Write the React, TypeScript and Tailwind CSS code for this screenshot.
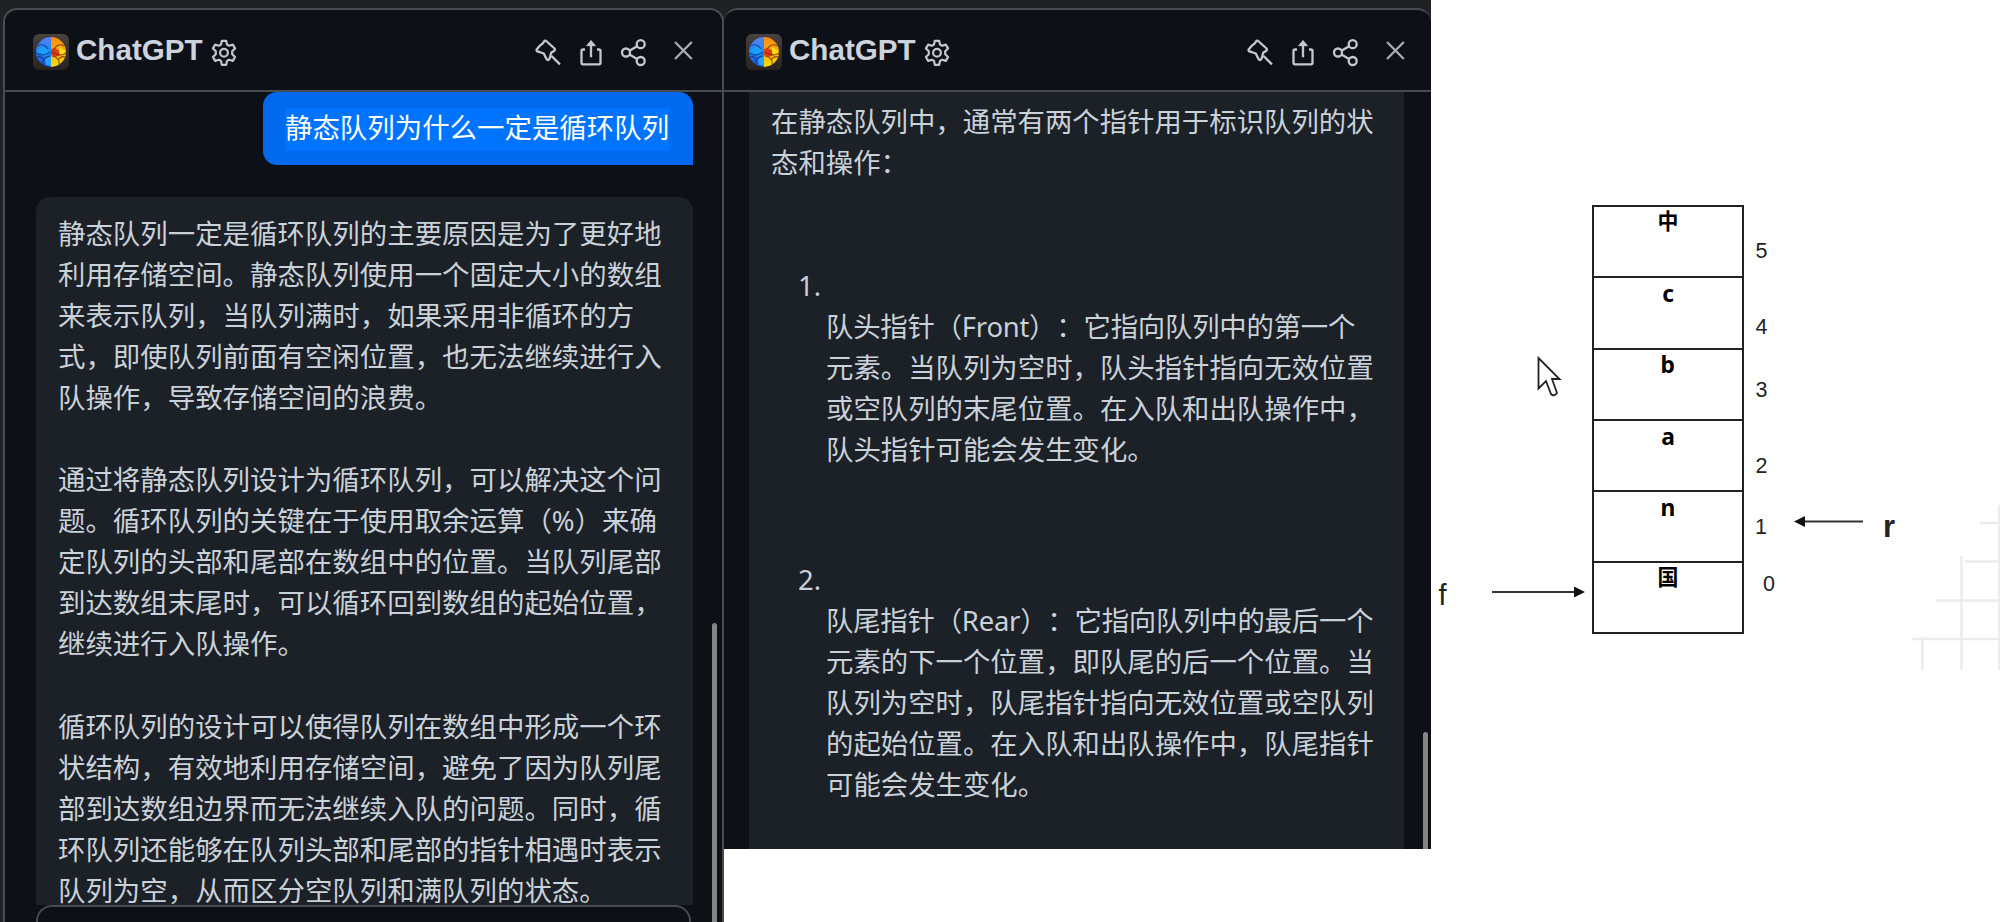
import React from "react";

const textFont = "font-['Noto_Sans','Noto_Sans_CJK_SC',sans-serif] [text-spacing-trim:space-all]";

const explanation = [
  ["静态队列一定是循环队列的主要原因是为了更好地", "利用存储空间。静态队列使用一个固定大小的数组", "来表示队列，当队列满时，如果采用非循环的方", "式，即使队列前面有空闲位置，也无法继续进行入", "队操作，导致存储空间的浪费。"],
  ["通过将静态队列设计为循环队列，可以解决这个问", "题。循环队列的关键在于使用取余运算（%）来确", "定队列的头部和尾部在数组中的位置。当队列尾部", "到达数组末尾时，可以循环回到数组的起始位置，", "继续进行入队操作。"],
  ["循环队列的设计可以使得队列在数组中形成一个环", "状结构，有效地利用存储空间，避免了因为队列尾", "部到达数组边界而无法继续入队的问题。同时，循", "环队列还能够在队列头部和尾部的指针相遇时表示", "队列为空，从而区分空队列和满队列的状态。"],
];

const pointers = [
  ["队头指针（Front）：它指向队列中的第一个", "元素。当队列为空时，队头指针指向无效位置", "或空队列的末尾位置。在入队和出队操作中，", "队头指针可能会发生变化。"],
  ["队尾指针（Rear）：它指向队列中的最后一个", "元素的下一个位置，即队尾的后一个位置。当", "队列为空时，队尾指针指向无效位置或空队列", "的起始位置。在入队和出队操作中，队尾指针", "可能会发生变化。"],
];

function Lines({ lines }: { lines: string[] }) {
  return (
    <>
      {lines.map((l) => (
        <div key={l} className="whitespace-nowrap">{l}</div>
      ))}
    </>
  );
}

function BrainLogo() {
  return (
    <svg className="h-9 w-9 shrink-0" viewBox="0 0 36 36">
      <defs>
        <linearGradient id="tile" x1="0" y1="0" x2="0" y2="1">
          <stop offset="0" stopColor="#47423f" />
          <stop offset="1" stopColor="#282320" />
        </linearGradient>
        <linearGradient id="cool" x1="0" y1="0" x2="0" y2="1">
          <stop offset="0" stopColor="#5a7ff0" />
          <stop offset=".5" stopColor="#168cf5" />
          <stop offset="1" stopColor="#2448d8" />
        </linearGradient>
        <linearGradient id="warm" x1="0" y1="0" x2="0" y2="1">
          <stop offset="0" stopColor="#ff8a10" />
          <stop offset=".5" stopColor="#fbb010" />
          <stop offset="1" stopColor="#f8e000" />
        </linearGradient>
      </defs>
      <rect width="36" height="36" rx="6" fill="url(#tile)" />
      <path d="M18 3A15 15 0 0 0 18 33Z" fill="url(#cool)" />
      <path d="M18 3A15 15 0 0 1 18 33Z" fill="url(#warm)" />
      <path d="M18 15l4-1 6 4-2 4-4 1-4-2z" fill="#e83a12" />
      <path d="M26 13l6 4-2 5-4-3z" fill="#ffdf1a" />
      <path d="M4 17l7-5 6 6-4 4z" fill="#19a0ff" />
      <path d="M12 25l6-3v10l-5-1z" fill="#22a4ff" />
      <g fill="none" stroke="#17307e" strokeWidth="1.1" opacity=".8">
        <path d="M5 12c4-3 8 0 10 3M3 19c4 3 8 3 14-1M10 31c-1-5 2-8 7-9M4 23c3-1 5 0 7 3" />
      </g>
      <g fill="none" stroke="#70300c" strokeWidth="1.1" opacity=".8">
        <path d="M31 12c-4-3-8 0-10 3M33 19c-4 3-8 3-14-1M26 31c1-5-2-8-7-9M32 23c-3-1-5 0-7 3" />
      </g>
    </svg>
  );
}

function GearIcon() {
  return (
    <svg className="mt-0.5 ml-[7px] h-[28px] w-[28px] shrink-0" viewBox="0 0 28 28" fill="none" stroke="#c2c7ce" strokeWidth="2.2" strokeLinejoin="round">
      <path d="M11.8 1.8h4.4l.8 3.8 2.1 1.2 3.7-1.2 2.3 3.8-2.9 2.9v2.9l2.9 2.8-2.3 3.9-3.7-1.2-2.1 1.2-.8 3.9h-4.4l-.8-3.9-2.1-1.2-3.7 1.2-2.3-3.9 2.9-2.8v-2.9L2.9 9.4l2.3-3.8 3.7 1.2L11 5.6z" />
      <circle cx="14" cy="13.8" r="3.9" />
    </svg>
  );
}

function HeaderActions() {
  return (
    <svg className="mt-[3px] ml-auto h-9 w-[170px]" viewBox="0 0 170 36" fill="none" stroke="#c5c9cf" strokeWidth="2.3" strokeLinejoin="round">
      <path d="M11.500 6.800Q12.400 6.300 13.200 7L21.500 14.500Q22.600 16 21 17L18.200 18.800 16.800 24Q15.500 27.500 13.500 25L10.800 19.500 4.500 17.400Q3 16.500 3.800 15.200L6.400 12.200 10 9.200ZM18.600 22l8.300 8.400" />
      <path d="M52 15.500h-2q-1.500 0-1.500 1.500v11.800q0 1.500 1.500 1.500h16q1.500 0 1.500-1.500V17q0-1.500-1.500-1.500H64M58 23.300V10" />
      <path d="M53.700 11.700L58 6.500l4.300 5.200z" fill="#c5c9cf" strokeWidth="1" />
      <circle cx="93" cy="18.500" r="4" />
      <circle cx="107.700" cy="10.200" r="4" />
      <circle cx="107.700" cy="27" r="4" />
      <path d="M96.500 16.700l7.600-4.400M96.500 20.400l7.600 4.600" />
      <path d="M142 8l16.800 17M158.800 8L142 25" stroke="#a9adb3" />
    </svg>
  );
}

function Header({ spacing }: { spacing: string }) {
  return (
    <header className={"flex h-[82px] shrink-0 items-center border-b-2 border-[#4a4b4e] " + spacing}>
      <div className="flex items-center pt-[3px]">
        <BrainLogo />
        <h1 className="-mt-[3px] ml-[7px] font-['Liberation_Sans',sans-serif] text-[29.6px] leading-9 font-bold text-[#cdd3dc]">ChatGPT</h1>
        <GearIcon />
      </div>
      <HeaderActions />
    </header>
  );
}

const cells = [
  { label: "中", style: "h-[71px] pt-0 text-[22px]" },
  { label: "c", style: "h-[72px] pt-[1px] text-[24px]" },
  { label: "b", style: "h-[71px] pt-0 text-[24px]" },
  { label: "a", style: "h-[71px] pt-[1px] text-[24px]" },
  { label: "n", style: "h-[71px] pt-[1px] text-[24px]" },
  { label: "国", style: "h-[71px] pt-0 text-[22px]" },
];

function QueueDiagram() {
  return (
    <section className="relative min-w-0 flex-1 overflow-hidden bg-white font-['Liberation_Sans','Noto_Sans_CJK_SC',sans-serif] text-black">
      <div className="absolute top-[205px] left-[161px] w-[152px] border-x-2 border-t-2 border-[#222] font-['Noto_Sans','Noto_Sans_CJK_SC',sans-serif]">
        {cells.map((c) => (
          <div key={c.label} className={"border-b-2 border-[#222] text-center leading-[27px] font-bold " + c.style}>
            <span className="inline-block scale-x-95">{c.label}</span>
          </div>
        ))}
      </div>
      <svg className="absolute top-0 left-0 h-full w-full" viewBox="1431 0 569 922">
        <g stroke="#ebebeb" strokeWidth="2.5">
          <path d="M1936 600.5H2000M1912 639H2000M1965 561.5H2000M1980 523H2000M1922.5 637V670M1961.5 556V670M1999.500 505V670" />
        </g>
        <g fontSize="21.5" fill="#222">
          <text x="1755.5" y="257.500">5</text>
          <text x="1755.5" y="333.500">4</text>
          <text x="1755.5" y="397">3</text>
          <text x="1755.5" y="473">2</text>
          <text x="1755" y="534">1</text>
          <text x="1763" y="591">0</text>
        </g>
        <text x="1438.500" y="604.500" fontSize="29" fill="#222">f</text>
        <text x="1883" y="537" fontSize="31" fontWeight="700" fill="#222">r</text>
        <g stroke="#333" strokeWidth="2">
          <path d="M1492 592H1576M1804 521.5H1863" />
        </g>
        <path d="M1574 586.5L1585 592 1574 597.500ZM1805 516L1794 521.500 1805 527Z" fill="#111" />
        <path d="M1538.500 358V388.500L1546 381 1551 394Q1554 397 1557 393L1552 379H1559.500Z" fill="#fff" stroke="#222" strokeWidth="1.800" />
      </svg>
    </section>
  );
}

export default function App() {
  return (
    <div className="flex h-[922px] w-[2000px] overflow-hidden bg-white">
      <section className="h-full w-[724px] shrink-0 overflow-hidden bg-[#202124] pt-2 pl-[3px]">
        <div className="relative flex h-[940px] flex-col overflow-hidden rounded-t-[14px] border-2 border-[#4a4b4e] bg-[#0d1017]">
          <Header spacing="pl-[28px] pr-[19px]" />
          <main className={"flex flex-col pr-[29px] pl-[31px] text-[27.45px] leading-[41.04px] text-[#c9d1d9] " + textFont}>
            <div className="flex h-[73px] w-[430px] items-start self-end rounded-t-[14px] rounded-bl-[14px] bg-[#0069ed] pt-4 pl-[22px] text-white">
              <span className="h-[43px] bg-[#0073ff] leading-[39px] whitespace-nowrap">静态队列为什么一定是循环队列</span>
            </div>
            <div className="mt-8 h-[708px] w-[657px] rounded-t-[14px] bg-[#1c2027] pt-4 pl-[22px]">
              {explanation.map((p, i) => (
                <div key={i} className="mb-[41.04px]">
                  <Lines lines={p} />
                </div>
              ))}
            </div>
            <div className="relative h-20 w-[655px] bg-[#0d1017]">
              <div className="h-20 rounded-[16px] border-2 border-[#4a4b4e]" />
            </div>
          </main>
          <div className="absolute top-[613px] right-[5px] h-[400px] w-[5px] rounded-full bg-[#858585]" />
        </div>
      </section>

      <section className="h-[849px] w-[707px] shrink-0 overflow-hidden bg-[#202124] pt-2">
        <div className="relative flex h-[841px] flex-col overflow-hidden rounded-t-[14px] border-t-2 border-[#4a4b4e] bg-[#0d1017]">
          <Header spacing="pl-[22px] pr-[16px]" />
          <main className={"ml-[25px] h-[757px] w-[655px] bg-[#1c2027] pt-[9px] pl-[22px] text-[27.4px] leading-[41.04px] text-[#c9d1d9] " + textFont}>
            <Lines lines={["在静态队列中，通常有两个指针用于标识队列的状", "态和操作："]} />
            <ol className="mt-[82px]">
              {pointers.map((p, i) => (
                <li key={i} className="mb-[88.500px] pl-[55px]">
                  <div className="-ml-[28px]">{i + 1}.</div>
                  <div className="tracking-[-0.22px]">
                    <Lines lines={p.slice(0, 1)} />
                  </div>
                  <Lines lines={p.slice(1)} />
                </li>
              ))}
            </ol>
          </main>
          <div className="absolute top-[722px] right-[3px] h-[140px] w-[5px] rounded-full bg-[#858585]" />
        </div>
      </section>

      <QueueDiagram />
    </div>
  );
}
